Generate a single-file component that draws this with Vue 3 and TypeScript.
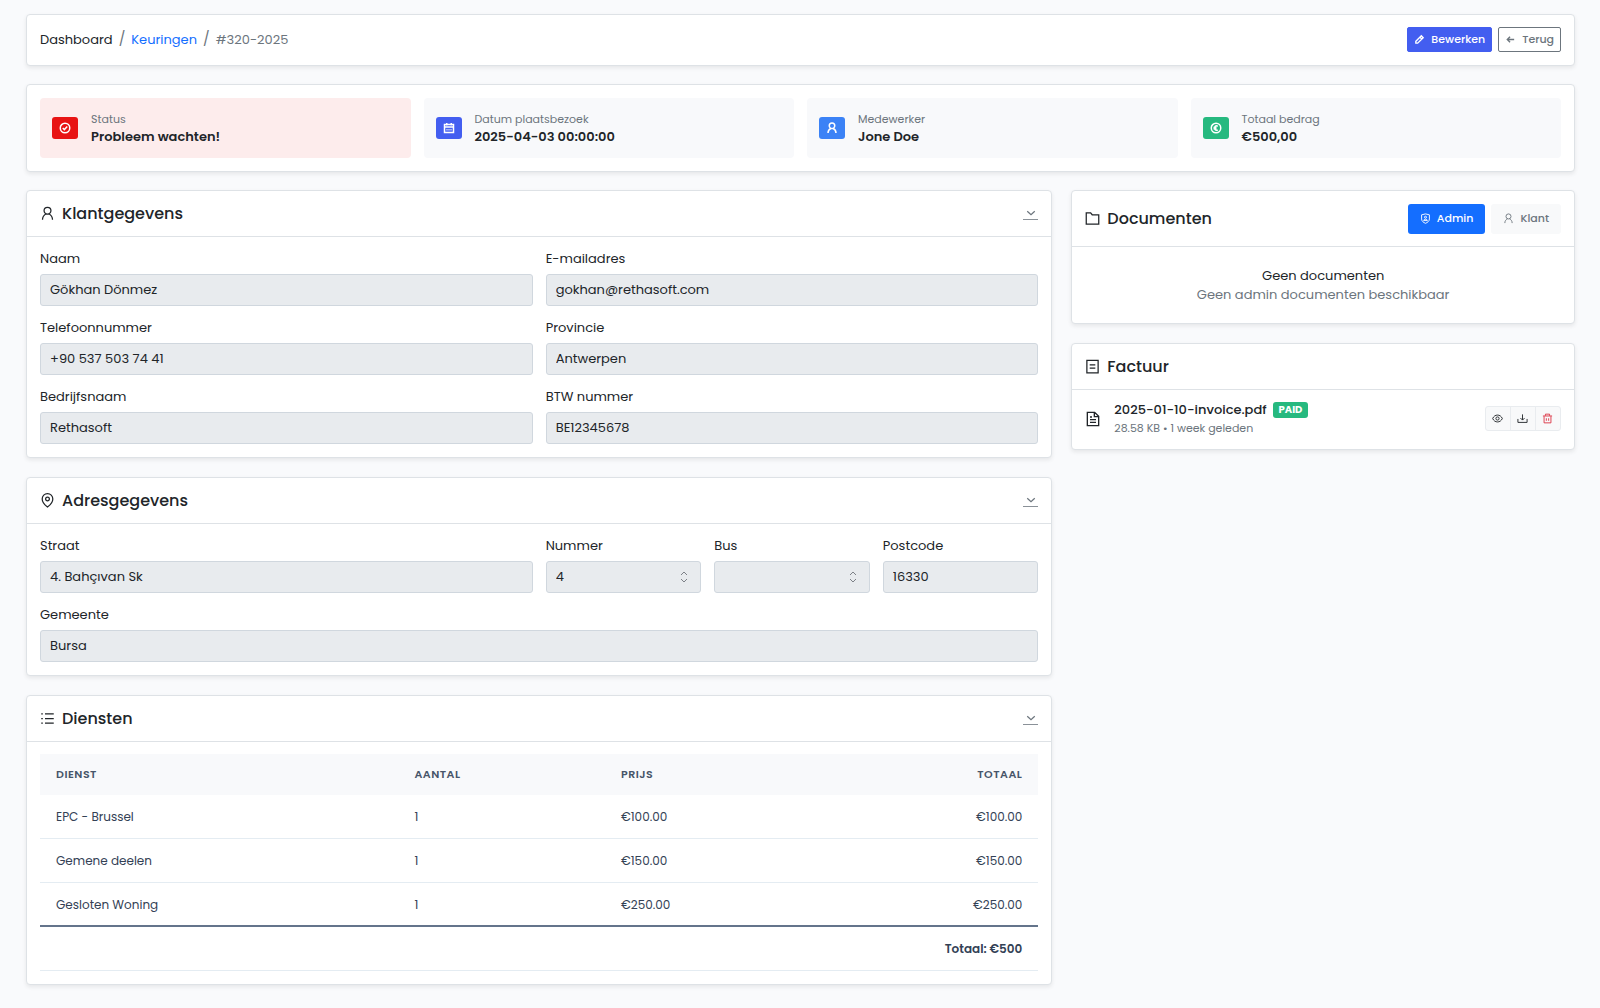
<script setup lang="ts">
import { ref, h, type FunctionalComponent } from 'vue'

interface Stat { icon: string; tone: string; label: string; value: string }
interface Field { id: string; label: string; value: string; span: number; type?: string }
interface Service { name: string; count: number; price: string; total: string }

const icons: Record<string, string> = {
  pencil: 'M4 20v-4L16 4l4 4L8 20H4zM13 7l4 4',
  arrow: 'M20 12H5M11 6l-6 6 6 6',
  check: 'M12 2.5a9.5 9.5 0 1 0 0 19 9.5 9.5 0 1 0 0-19M7.5 12l3.2 3.2 5.8-6',
  calendar: 'M3 5h18v16H3zM3 10h18M7.5 2v5M16.5 2v5M7 15.5h2M11 15.5h2M15 15.5h2',
  user: 'M12 2a5.5 5.5 0 1 0 0 11 5.5 5.5 0 1 0 0-11M4 22c0-5 3-8 6-9.5M20 22c0-5-3-8-6-9.5',
  euro: 'M12 2.5a9.5 9.5 0 1 0 0 19 9.5 9.5 0 1 0 0-19M15.5 8.5a4.2 4.2 0 1 0 0 7M7 11h6M7 13.5h6',
  pin: 'M12 22.5s8.5-6.5 8.5-13a8.5 8.5 0 0 0-17 0c0 6.5 8.5 13 8.5 13zM12 6.5a3 3 0 1 0 0 6 3 3 0 1 0 0-6',
  list: 'M8 4.5h14M8 12h14M8 19.5h14M2 4.5h2.5M2 12h2.5M2 19.5h2.5',
  folder: 'M2 3h7l2.5 3H22v15H2z',
  invoice: 'M3 2h18v20H3zM7.5 9.5h9M7.5 14.5h9',
  file: 'M3.5 2h11l6 6v14h-17zM14 2v6.5h6.5M7.5 9h3M7.5 13h9M7.5 17h9',
  shield: 'M12 2l8.5 2v9c0 5-4 7.5-8.5 9.5-4.5-2-8.5-4.5-8.5-9.5V4zM12 7a2.2 2.2 0 1 0 0 4.4A2.2 2.2 0 1 0 12 7M8 16.5c0-4 8-4 8 0z',
  eye: 'M1.5 12c4-10 17-10 21 0-4 10-17 10-21 0zM12 8.5a3.5 3.5 0 1 0 0 7 3.5 3.5 0 1 0 0-7',
  download: 'M2 13v7.5h20V13M12 3v12M7.5 11l4.5 4.5 4.5-4.5',
  trash: 'M2 6.5h20M7.5 6V2.5h9V6M4.5 7v14.5h15V7M9.5 11.5v5.5M14.5 11.5v5.5',
  chevron: 'M3 8l9 8 9-8',
}

const Icon: FunctionalComponent<{ name: string; weight?: number }> = (p) =>
  h('svg', {
    viewBox: '0 0 24 24', fill: 'none', stroke: 'currentColor',
    'stroke-width': p.weight ?? 2, 'aria-hidden': 'true',
  }, [h('path', { d: icons[p.name] })])
Icon.props = ['name', 'weight']

const stats: Stat[] = [
  { icon: 'check', tone: 'red', label: 'Status', value: 'Probleem wachten!' },
  { icon: 'calendar', tone: 'indigo', label: 'Datum plaatsbezoek', value: '2025-04-03 00:00:00' },
  { icon: 'user', tone: 'blue', label: 'Medewerker', value: 'Jone Doe' },
  { icon: 'euro', tone: 'green', label: 'Totaal bedrag', value: '€500,00' },
]

const forms: { title: string; icon: string; fields: Field[] }[] = [
  {
    title: 'Klantgegevens', icon: 'user', fields: [
      { id: 'naam', label: 'Naam', value: 'Gökhan Dönmez', span: 6 },
      { id: 'email', label: 'E-mailadres', value: 'gokhan@rethasoft.com', span: 6 },
      { id: 'telefoon', label: 'Telefoonnummer', value: '+90 537 503 74 41', span: 6 },
      { id: 'provincie', label: 'Provincie', value: 'Antwerpen', span: 6 },
      { id: 'bedrijf', label: 'Bedrijfsnaam', value: 'Rethasoft', span: 6 },
      { id: 'btw', label: 'BTW nummer', value: 'BE12345678', span: 6 },
    ],
  },
  {
    title: 'Adresgegevens', icon: 'pin', fields: [
      { id: 'straat', label: 'Straat', value: '4. Bahçıvan Sk', span: 6 },
      { id: 'nummer', label: 'Nummer', value: '4', span: 2, type: 'number' },
      { id: 'bus', label: 'Bus', value: '', span: 2, type: 'number' },
      { id: 'postcode', label: 'Postcode', value: '16330', span: 2 },
      { id: 'gemeente', label: 'Gemeente', value: 'Bursa', span: 12 },
    ],
  },
]

const services: Service[] = [
  { name: 'EPC - Brussel', count: 1, price: '€100.00', total: '€100.00' },
  { name: 'Gemene deelen', count: 1, price: '€150.00', total: '€150.00' },
  { name: 'Gesloten Woning', count: 1, price: '€250.00', total: '€250.00' },
]

const tab = ref<'admin' | 'klant'>('admin')
</script>

<template>
  <div class="page">
    <header class="card topbar">
      <nav class="crumbs" aria-label="Kruimelpad">
        <a href="#" class="home">Dashboard</a><span class="slash">/</span>
        <a href="#">Keuringen</a><span class="slash">/</span>
        <span>#320-2025</span>
      </nav>
      <div class="actions">
        <button type="button" class="btn primary"><Icon name="pencil" :weight="3" />Bewerken</button>
        <button type="button" class="btn outline"><Icon name="arrow" :weight="3" />Terug</button>
      </div>
    </header>

    <section class="card stats">
      <div v-for="s in stats" :key="s.label" class="stat" :class="{ alert: s.tone === 'red' }">
        <span class="badge-icon" :class="s.tone"><Icon :name="s.icon" :weight="3" /></span>
        <div>
          <div class="stat-label">{{ s.label }}</div>
          <div class="stat-value">{{ s.value }}</div>
        </div>
      </div>
    </section>

    <main class="columns">
      <div class="col wide">
        <section v-for="f in forms" :key="f.title" class="card">
          <div class="card-head">
            <h2><Icon :name="f.icon" />{{ f.title }}</h2>
            <button type="button" class="collapse" :aria-label="f.title + ' inklappen'"><Icon name="chevron" :weight="3" /></button>
          </div>
          <form class="fields">
            <div v-for="x in f.fields" :key="x.id" class="field" :class="'span-' + x.span">
              <label :for="x.id">{{ x.label }}</label>
              <div class="control">
                <input :id="x.id" :type="x.type ?? 'text'" :value="x.value" disabled>
                <svg v-if="x.type === 'number'" class="spin" viewBox="0 0 8 12" fill="none" stroke="currentColor" aria-hidden="true">
                  <path d="M1 4l3-3 3 3M1 8l3 3 3-3" />
                </svg>
              </div>
            </div>
          </form>
        </section>

        <section class="card">
          <div class="card-head">
            <h2><Icon name="list" />Diensten</h2>
            <button type="button" class="collapse" aria-label="Diensten inklappen"><Icon name="chevron" :weight="3" /></button>
          </div>
          <div class="table-wrap">
            <table>
              <thead>
                <tr><th class="c-name">Dienst</th><th class="c-count">Aantal</th><th>Prijs</th><th class="end">Totaal</th></tr>
              </thead>
              <tbody>
                <tr v-for="s in services" :key="s.name">
                  <td>{{ s.name }}</td><td>{{ s.count }}</td><td>{{ s.price }}</td><td class="end">{{ s.total }}</td>
                </tr>
              </tbody>
              <tfoot>
                <tr><td colspan="4" class="end">Totaal: €500</td></tr>
              </tfoot>
            </table>
          </div>
        </section>
      </div>

      <div class="col narrow">
        <section class="card">
          <div class="card-head tall">
            <h2><Icon name="folder" />Documenten</h2>
            <div class="actions">
              <button type="button" class="tab" :class="{ active: tab === 'admin' }" @click="tab = 'admin'"><Icon name="shield" />Admin</button>
              <button type="button" class="tab" :class="{ active: tab === 'klant' }" @click="tab = 'klant'"><Icon name="user" />Klant</button>
            </div>
          </div>
          <div class="empty">
            <div>Geen documenten</div>
            <div class="muted">Geen {{ tab }} documenten beschikbaar</div>
          </div>
        </section>

        <section class="card">
          <div class="card-head">
            <h2><Icon name="invoice" />Factuur</h2>
          </div>
          <div class="file">
            <Icon name="file" class="file-icon" :weight="2" />
            <div class="file-text">
              <div class="file-name">2025-01-10-invoice.pdf <span class="paid">PAID</span></div>
              <div class="file-meta">28.58 KB • 1 week geleden</div>
            </div>
            <div class="group">
              <button type="button" aria-label="Bekijken"><Icon name="eye" /></button>
              <button type="button" aria-label="Downloaden"><Icon name="download" /></button>
              <button type="button" class="danger" aria-label="Verwijderen"><Icon name="trash" /></button>
            </div>
          </div>
        </section>
      </div>
    </main>
  </div>
</template>

<style>
body {
  background: #f9fafc;
}
</style>

<style scoped>
.page {
  box-sizing: border-box;
  padding: 14px 25px 23px 26px;
  display: flex;
  flex-direction: column;
  gap: 18px;
  font: 400 13px/19px Poppins, Inter, "Liberation Sans", sans-serif;
  color: #212529;
}
.page *, .page *::before { box-sizing: border-box; }
button, input { font-family: inherit; margin: 0; }
svg { flex: none; display: block; }

.card {
  background: #fff;
  border: 1px solid #dee2e6;
  border-radius: 4px;
  box-shadow: 0 2px 4px rgba(0, 0, 0, 0.08);
}
.topbar { display: flex; align-items: center; justify-content: space-between; padding: 12px 13px 13px; }
.crumbs { display: flex; gap: 6px; color: #6c757d; }
.crumbs a { color: #146eff; text-decoration: none; }
.crumbs a.home { color: #212529; }
.slash { font-size: 14px; }
.actions { display: flex; gap: 6px; }
.btn {
  display: flex; align-items: center; gap: 6px;
  height: 25px; padding: 0 6px; border: 1px solid; border-radius: 2px;
  font-size: 11px; line-height: 17px; font-weight: 500;
}
.btn svg { width: 11px; height: 11px; }
.btn.primary { background: #435ef0; border-color: #435ef0; color: #fff; }
.btn.outline { background: #fff; border-color: #6c757d; color: #6c757d; }

.stats { display: grid; grid-template-columns: repeat(4, 1fr); gap: 13px; padding: 13px; }
.stat { display: flex; align-items: center; gap: 13px; padding: 13px 12px; background: #f8f9fb; border-radius: 4px; }
.stat.alert { background: #fdecec; }
.badge-icon { display: flex; align-items: center; justify-content: center; width: 26px; height: 22px; border-radius: 3px; color: #fff; }
.badge-icon svg { width: 12px; height: 12px; }
.red { background: #e81313; }
.indigo { background: #435ef0; }
.blue { background: #3b82f6; }
.green { background: #26b97f; }
.stat-label { font-size: 11px; line-height: 17px; color: #6c757d; }
.stat-value { font-size: 13px; line-height: 17px; font-weight: 600; }

.columns { display: grid; grid-template-columns: repeat(12, minmax(0, 1fr)); gap: 19px; align-items: start; }
.col { display: flex; flex-direction: column; gap: 19px; }
.wide { grid-column: span 8; }
.narrow { grid-column: span 4; }

.card-head { display: flex; align-items: center; justify-content: space-between; height: 46px; padding: 0 13px; border-bottom: 1px solid #dee2e6; }
.card-head.tall { height: 56px; }
h2 { display: flex; align-items: center; gap: 7px; margin: 0; font-size: 16px; line-height: 20px; font-weight: 500; }
h2 svg { width: 15px; height: 15px; }
.collapse { display: flex; justify-content: center; width: 15px; height: 12px; padding: 0; border: 0; border-bottom: 1px solid #8a9198; background: none; color: #6c757d; }
.collapse svg { width: 10px; height: 10px; }

.fields { display: grid; grid-template-columns: repeat(12, minmax(0, 1fr)); gap: 13px; padding: 13px; }
.span-2 { grid-column: span 2; }
.span-6 { grid-column: span 6; }
.span-12 { grid-column: span 12; }
label { display: block; margin-bottom: 6px; line-height: 18px; }
.control { position: relative; }
input {
  display: block; width: 100%; height: 32px; padding: 0 9px;
  border: 1px solid #d0d7de; border-radius: 3px; background: #e8ebee; color: #212529;
  font-size: 13px; appearance: textfield;
}
.spin { position: absolute; right: 13px; top: 10px; width: 8px; height: 12px; color: #7d8187; }

.table-wrap { padding: 12px 13px 13px; }
table { width: 100%; border-collapse: separate; border-spacing: 0; table-layout: fixed; color: #334155; font-size: 12px; }
th, td { padding: 0 16px; text-align: left; }
th { height: 41px; background: #f8f9fb; color: #475569; font-size: 11px; font-weight: 600; text-transform: uppercase; letter-spacing: 0.5px; }
.c-name { width: 35.9%; }
.c-count { width: 20.7%; }
td { height: 44px; border-bottom: 1px solid #e4ecf2; }
tbody tr:last-child td { border-bottom: 2px solid #64748b; }
tfoot td { font-weight: 600; }
th.end, td.end { text-align: right; }

.tab { display: flex; align-items: center; gap: 6px; height: 30px; padding: 0 12px; border: 0; border-radius: 3px; background: #f8f9fa; color: #6c757d; font-size: 11px; font-weight: 500; }
.tab svg { width: 11px; height: 11px; }
.tab.active { background: #146eff; color: #fff; }
.empty { padding: 19px 13px; text-align: center; }
.muted { color: #6c757d; }

.file { display: flex; align-items: center; padding: 10px 13px 12px; }
.file-icon { width: 16px; height: 16px; margin-right: 13px; }
.file-text { flex: 1; }
.file-name { display: flex; align-items: center; gap: 6px; font-weight: 500; }
.file-meta { font-size: 11px; line-height: 18px; color: #6c757d; }
.paid { padding: 0 6px; border-radius: 3px; background: #26b97f; color: #fff; font-size: 10px; line-height: 16px; font-weight: 700; }
.group { display: flex; }
.group button { display: flex; align-items: center; justify-content: center; width: 26px; height: 25px; padding: 0; border: 1px solid #e9ecef; background: #f8f9fa; color: #212529; }
.group button + button { margin-left: -1px; }
.group button:first-child { border-radius: 3px 0 0 3px; }
.group button:last-child { border-radius: 0 3px 3px 0; }
.group svg { width: 11px; height: 11px; }
.group .danger { color: #dc3545; }
</style>
